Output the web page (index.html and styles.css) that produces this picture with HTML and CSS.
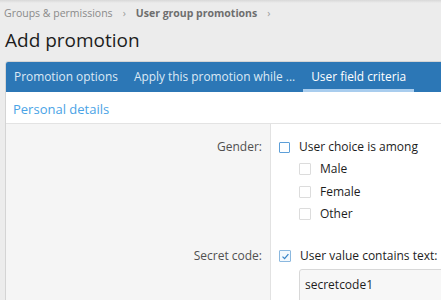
FILE: index.html
```html
<!DOCTYPE html>
<html>
<head>
<meta charset="utf-8">
<link rel="stylesheet" href="styles.css">
</head>
<body>
<div class="topshade"></div>
<nav class="crumbs">
  <a class="crumb">Groups &amp; permissions</a>
  <span class="sep">›</span>
  <a class="crumb current">User group promotions</a>
  <span class="sep">›</span>
</nav>
<h1 class="title">Add promotion</h1>
<div class="block">
  <div class="tabs">
    <span class="tab">Promotion options</span>
    <span class="tab">Apply this promotion while ...</span>
    <span class="tab active">User field criteria</span>
  </div>
  <div class="section-head">Personal details</div>
  <div class="form">
    <div class="row">
      <div class="label">Gender:</div>
      <div class="ctrl">
        <label class="check"><span class="box"></span>User choice is among</label>
        <div class="sub">
          <label class="check"><span class="box faint"></span>Male</label>
          <label class="check"><span class="box faint"></span>Female</label>
          <label class="check"><span class="box faint"></span>Other</label>
        </div>
      </div>
    </div>
    <div class="row row2">
      <div class="label">Secret code:</div>
      <div class="ctrl">
        <label class="check"><span class="box checked"><svg width="9" height="9" viewBox="0 0 9 9"><path d="M1.5 4.6 L3.6 6.6 L7.4 2.2" fill="none" stroke="#3b86c8" stroke-width="1.3"/></svg></span>User value contains text:</label>
        <div class="sub">
          <div class="input">secretcode1</div>
        </div>
      </div>
    </div>
  </div>
</div>
</body>
</html>
```
FILE: styles.css
```css
html, body {
  margin: 0;
  padding: 0;
  overflow: hidden;
}
body {
  background: #ececec;
  font-family: "Segoe UI", "Open Sans", "Noto Sans", sans-serif;
  color: #141414;
  width: 441px;
  height: 300px;
  position: relative;
}
.topshade {
  position: absolute;
  left: 0; right: 0; top: 0;
  height: 3px;
  background: linear-gradient(#d8d8d8, #ececec);
}
.crumbs {
  padding: 5px 0 0 4px;
  font-size: 10.5px;
  line-height: 17px;
  color: #8a8a8a;
  display: flex;
  gap: 10px;
}
.crumb.current {
  font-weight: bold;
  color: #6e6e6e;
}
.sep { color: #9a9a9a; }
.title {
  margin: 5px 0 0 5px;
  font-weight: normal;
  font-size: 19px;
  line-height: 26px;
  color: #1d1d1d;
}
.block {
  margin: 8px 0 0 5px;
  width: 460px;
  border: 1px solid #d4d4d4;
  border-radius: 3px;
  background: #fff;
  overflow: hidden;
}
.tabs {
  background: #2c77b6;
  height: 30px;
  display: flex;
  align-items: stretch;
}
.tab {
  color: #dce9f5;
  font-size: 11.9px;
  padding: 1px 8px 0;
  display: flex;
  align-items: center;
  border-bottom: 3px solid transparent;
}
.tab.active {
  color: #fff;
  border-bottom-color: #a9cdee;
}
.section-head {
  color: #4aa3e6;
  font-size: 13px;
  line-height: 18px;
  padding: 8px 7px 5px;
  border-bottom: 1px solid #e3e3e3;
}
.form {
  background: linear-gradient(to right, #f5f5f5 264px, #e2e2e2 264px, #e2e2e2 265px, #fff 265px);
  padding-top: 14px;
  min-height: 200px;
}
.row {
  display: grid;
  grid-template-columns: 265px 1fr;
}
.row2 { margin-top: 24px; }
.label {
  text-align: right;
  padding-right: 9px;
  font-size: 12px;
  line-height: 18px;
  color: #505050;
}
.ctrl {
  padding-left: 8px;
  font-size: 12px;
  line-height: 18px;
  color: #1d1d1d;
}
.check {
  display: flex;
  align-items: center;
  height: 18px;
}
.box {
  width: 9px;
  height: 9px;
  border: 1.5px solid #5d9fd8;
  border-radius: 1px;
  margin-right: 9px;
  background: #fff;
  display: inline-flex;
  align-items: center;
  justify-content: center;
}
.box.faint { border: 1px solid #dcdcdc; width: 10px; height: 10px; }
.box.checked { border: 1px solid #8bb8df; background: #f4f9fd; width: 10px; height: 10px; }
.sub {
  padding-left: 20px;
  display: flex;
  flex-direction: column;
  gap: 4.5px;
  margin-top: 4px;
}
.input {
  border: 1px solid #d8d8d8;
  border-radius: 3px;
  background: #f7f7f7;
  height: 32px;
  padding: 0 5px;
  line-height: 30px;
  width: 200px;
  color: #1d1d1d;
}
```
